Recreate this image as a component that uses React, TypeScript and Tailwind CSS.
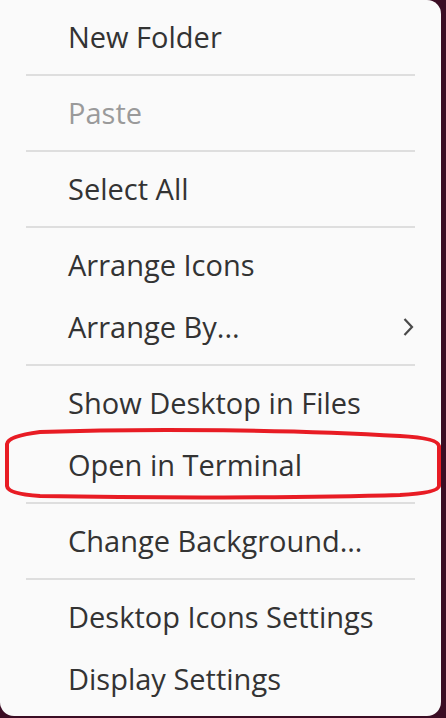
import React from "react";

const Item = ({ label, disabled, sub }: { label: string; disabled?: boolean; sub?: boolean }) => (
  <div className="flex h-[62px] items-center justify-between pl-[68px] pr-[27px]">
    <span className={disabled ? "text-[#9a9a9a]" : "text-[#333333]"}>{label}</span>
    {sub && (
      <svg width="12" height="20" viewBox="0 0 12 20" className="text-[#4a4a4a]">
        <path d="M2.5 2 L10 10 L2.5 18" fill="none" stroke="currentColor" strokeWidth="2.2" />
      </svg>
    )}
  </div>
);

const Sep = () => (
  <div className="flex h-[14px] items-center px-[26px]">
    <div className="h-[2px] w-full bg-[#dedede]" />
  </div>
);

export default function App() {
  return (
    <div className="relative h-[718px] w-[446px] overflow-hidden bg-[#3b0d24]">
      <div
        className="flex h-[716px] w-[441px] flex-col rounded-tr-[14px] rounded-b-[14px] bg-[#fafafa] pt-[6px] text-[29px]"
        style={{ fontFamily: '"Open Sans", "Noto Sans", sans-serif' }}
      >
        <Item label="New Folder" />
        <Sep />
        <Item label="Paste" disabled />
        <Sep />
        <Item label="Select All" />
        <Sep />
        <Item label="Arrange Icons" />
        <Item label="Arrange By..." sub />
        <Sep />
        <Item label="Show Desktop in Files" />
        <Item label="Open in Terminal" />
        <Sep />
        <Item label="Change Background…" />
        <Sep />
        <Item label="Desktop Icons Settings" />
        <Item label="Display Settings" />
      </div>
      <svg className="pointer-events-none absolute left-0 top-0" width="446" height="718">
        <path
          d="M 40 432 C 150 428, 300 430, 400 436 Q 438 438, 439 446 L 439 486 Q 438 493, 400 495 C 300 498, 150 498, 40 496 Q 8 494, 7 486 L 7 444 Q 8 436, 40 432 Z"
          fill="none"
          stroke="#e81c24"
          strokeWidth="4"
        />
      </svg>
    </div>
  );
}
